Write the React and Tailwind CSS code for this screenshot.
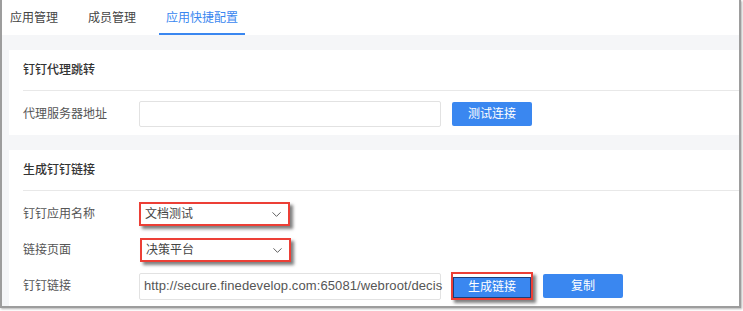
import { ChevronDown } from 'lucide-react'

const font = { fontFamily: '"Liberation Sans", "Noto Sans CJK SC", sans-serif' }

function Label({ children }) {
  return <div className="w-[116px] shrink-0 text-[12px] text-[#555]">{children}</div>
}

function BlueButton({ children, className = '' }) {
  return (
    <button className={`h-[24px] w-[80px] rounded-[2px] bg-[#3a87f0] text-[12px] text-white ${className}`}>
      {children}
    </button>
  )
}

function Select({ value, className = '' }) {
  return (
    <div
      className={`flex h-[24px] w-[151px] items-center justify-between border-2 border-[#ec3f36] bg-white pl-[4px] pr-[4px] text-[12px] text-[#444] shadow-[3px_3px_3px_rgba(0,0,0,0.5)] ${className}`}
    >
      <span>{value}</span>
      <ChevronDown className="h-[15px] w-[15px] text-[#555]" strokeWidth={1.5} />
    </div>
  )
}

function Card({ title, children, className = '' }) {
  return (
    <div className={`bg-white pl-[14px] ${className}`}>
      <div className="flex h-[40px] items-center text-[12px] font-medium text-[#333]">{title}</div>
      <div className="h-px bg-[#e8e8e8]" />
      {children}
    </div>
  )
}

export default function App() {
  return (
    <div className="h-[311px] w-[743px] bg-white" style={font}>
      <div className="flex h-[308px] w-[741px] flex-col border-x-2 border-b-2 border-[#9d9d9d] shadow-[1px_1px_2px_rgba(0,0,0,0.3)]">
        {/* Tabs */}
        <div className="flex h-[35px] shrink-0 gap-[16px] bg-white pl-[1px] text-[12px]">
          <div className="flex items-center px-[7px] text-[#444]">应用管理</div>
          <div className="flex items-center px-[7px] text-[#444]">成员管理</div>
          <div className="flex items-center border-b-2 border-[#3a87f0] px-[7px] pt-[2px] text-[#3a87f0]">应用快捷配置</div>
        </div>

        {/* Content */}
        <div className="flex flex-1 flex-col gap-[15px] bg-[#f5f6f8] pl-[7px] pt-[15px]">
          <Card title="钉钉代理跳转" className="h-[85px]">
            <div className="flex items-center pt-[10px]">
              <Label>代理服务器地址</Label>
              <div className="h-[26px] w-[302px] rounded-[2px] border border-[#e2e2e2] bg-white" />
              <BlueButton className="ml-[11px]">测试连接</BlueButton>
            </div>
          </Card>

          <Card title="生成钉钉链接" className="flex-1">
            <div className="flex items-center pt-[11px]">
              <Label>钉钉应用名称</Label>
              <Select value="文档测试" />
            </div>
            <div className="flex items-center pt-[12px]">
              <Label>链接页面</Label>
              <Select value="决策平台" className="ml-px" />
            </div>
            <div className="flex items-center pt-[10px]">
              <Label>钉钉链接</Label>
              <div className="flex h-[27px] w-[302px] items-center whitespace-nowrap rounded-[2px] border border-[#e2e2e2] bg-white pl-[4px] text-[13px] tracking-[0.1px] text-[#555]">
                http://secure.finedevelop.com:65081/webroot/decis
              </div>
              <div className="ml-[10px] border-2 border-[#ec3f36] shadow-[3px_3px_3px_rgba(0,0,0,0.5)]">
                <button className="h-[21px] w-[78px] border border-[#1c3f7a] bg-[#3a87f0] text-[12px] text-white">生成链接</button>
              </div>
              <BlueButton className="ml-[10px]">复制</BlueButton>
            </div>
          </Card>
        </div>
      </div>
    </div>
  )
}
